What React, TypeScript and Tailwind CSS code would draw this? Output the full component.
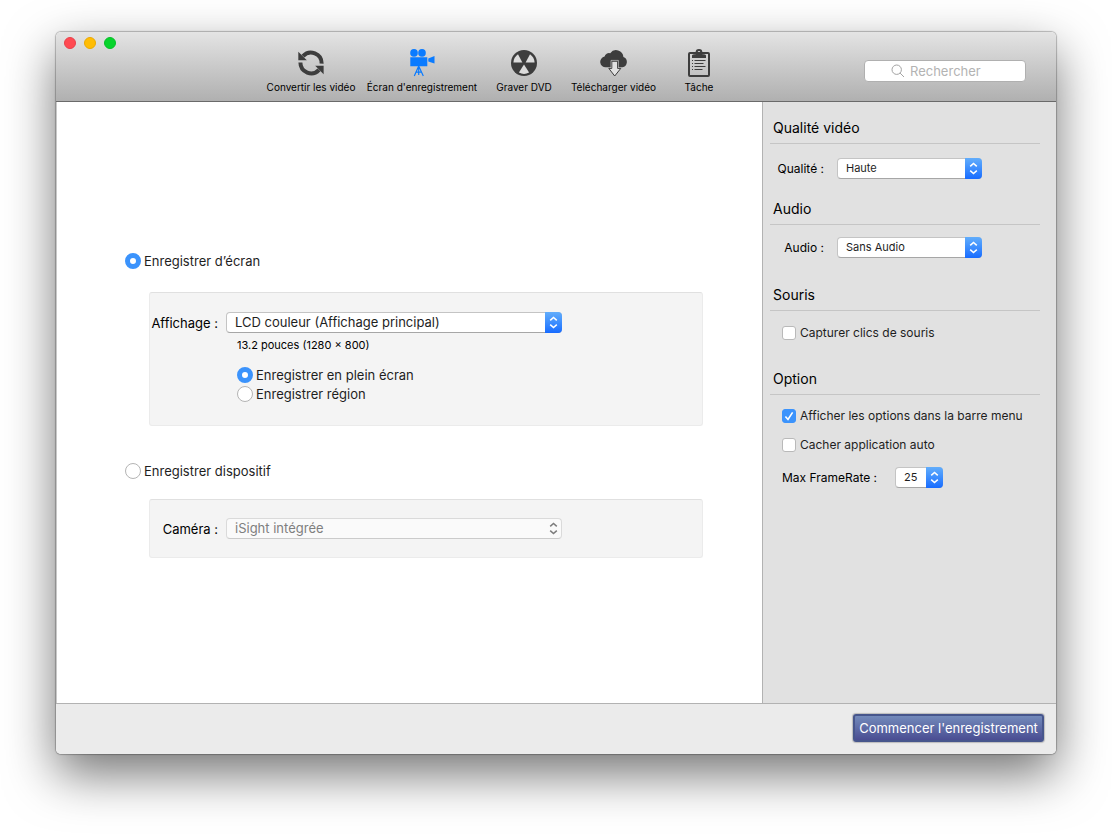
import { useState } from "react"
import type { ReactNode } from "react"
import clsx from "clsx"

function ConvertIcon() {
  return (
    <svg width="26" height="26" viewBox="0 0 26 26" fill="none" aria-hidden="true">
      <path d="M23.6 13.6A10.7 10.7 0 0 0 5 6.2" stroke="#3d3d3d" strokeWidth="4" />
      <path d="M0.3 1.8V10.2H8.8Z" fill="#3d3d3d" />
      <path d="M2.4 12.6A10.7 10.7 0 0 0 21 19.8" stroke="#3d3d3d" strokeWidth="4" />
      <path d="M25.6 24.2V15.8H17.2Z" fill="#3d3d3d" />
    </svg>
  )
}

function CameraIcon() {
  return (
    <svg width="25" height="28" viewBox="0 0 25 28" fill="#0a7bff" aria-hidden="true">
      <circle cx="4" cy="3.9" r="3.8" />
      <circle cx="12" cy="3.9" r="3.8" />
      <path d="M0.3 8.2H17.3V17.3H0.3Z" />
      <path d="M18.3 9.6L24.5 7V14.6L18.3 12.4Z" />
      <path d="M8.7 17L4.3 27M8.7 17L13.3 27M8.7 17V26M6 23.2H11.6" stroke="#0a7bff" strokeWidth="1.2" fill="none" />
    </svg>
  )
}

function BurnIcon() {
  return (
    <svg width="26" height="26" viewBox="0 0 26 26" aria-hidden="true">
      <circle cx="13" cy="13" r="13" fill="#3d3d3d" />
      <g fill="#dcdcdc">
        <path d="M11.4 12.4L2.4 12.4A10.7 10.7 0 0 1 7 4.2Z" />
        <path d="M14.6 12.4L23.6 12.4A10.7 10.7 0 0 0 19 4.2Z" />
        <path d="M13 14.4L18.1 22.6A10.9 10.9 0 0 1 7.9 22.6Z" />
      </g>
    </svg>
  )
}

function DownloadIcon() {
  return (
    <svg width="28" height="28" viewBox="0 0 28 28" aria-hidden="true">
      <path
        d="M5.8 18.3A5.4 5.4 0 0 1 4.6 7.6A4.4 4.4 0 0 1 10.2 4.2A7.3 7.3 0 0 1 23.4 8.1A5.3 5.3 0 0 1 22.4 18.3Z"
        fill="#3d3d3d"
      />
      <path d="M11.8 12.2H17.6V19.4H20.8L14.7 27L8.8 19.4H11.8Z" fill="#e2e2e2" stroke="#3d3d3d" strokeWidth="1" />
      <path d="M11 18.8V11.4H18.4V18.8" fill="none" stroke="#e2e2e2" strokeWidth="0.6" />
    </svg>
  )
}

function TaskIcon() {
  return (
    <svg width="22" height="28" viewBox="0 0 22 28" fill="none" aria-hidden="true">
      <rect x="1" y="4" width="20" height="23" rx="1" stroke="#3d3d3d" strokeWidth="2" />
      <path
        fillRule="evenodd"
        d="M4 9V6.6Q4 5.4 6 5.2H7.6V3.4A3.4 3.4 0 0 1 14.4 3.4V5.2H16Q18 5.4 18 6.6V9ZM11 2A1.3 1.3 0 1 0 11 4.6A1.3 1.3 0 1 0 11 2Z"
        fill="#3d3d3d"
      />
      <path d="M4 11.5H5M4 14.5H5M4 17.5H5M4 20.5H5" stroke="#3d3d3d" />
      <path d="M6.5 11.5H17.5M6.5 14.5H15.5M6.5 17.5H17.5M6.5 20.5H14.5" stroke="#3d3d3d" />
    </svg>
  )
}

const tools = [
  { label: "Convertir les vidéo", icon: <ConvertIcon />, width: "w-[100px]" },
  { label: "Écran d'enregistrement", icon: <CameraIcon />, width: "w-[122px]" },
  { label: "Graver DVD", icon: <BurnIcon />, width: "w-[82px]" },
  { label: "Télécharger vidéo", icon: <DownloadIcon />, width: "w-[97px]" },
  { label: "Tâche", icon: <TaskIcon />, width: "w-[74px]" },
]

interface SelectProps {
  id: string
  options: string[]
  className?: string
  disabled?: boolean
}

function Select({ id, options, className, disabled }: SelectProps) {
  return (
    <div className={clsx("relative h-[21px]", className)}>
      <select
        id={id}
        disabled={disabled}
        className={clsx(
          "block h-full w-full appearance-none rounded-[4px] border pl-2 pr-5 leading-[19px] outline-none",
          disabled
            ? "border-[#dadada] border-b-[#cbcbcb] bg-[#fafafa] text-[#7f7f7f] opacity-100"
            : "border-[#c4c4c4] border-b-[#a6a6a6] bg-white text-[#1e1e1e]"
        )}
      >
        {options.map((option) => (
          <option key={option}>{option}</option>
        ))}
      </select>
      <span
        className={clsx(
          "pointer-events-none absolute inset-y-0 right-0 flex w-[17px] items-center justify-center rounded-r-[4px]",
          !disabled && "bg-linear-to-b from-[#62adfb] to-[#176bff]"
        )}
      >
        <svg width="9" height="13" viewBox="0 0 9 13" fill="none" stroke={disabled ? "#7d7d7d" : "#fff"} strokeWidth="1.5">
          <path d="M1.2 4.4L4.5 1.4L7.8 4.4M1.2 8.6L4.5 11.6L7.8 8.6" />
        </svg>
      </span>
    </div>
  )
}

interface RadioProps {
  name: string
  label: string
  checked: boolean
  onChange: () => void
}

function Radio({ name, label, checked, onChange }: RadioProps) {
  return (
    <label className="flex h-[19px] items-center gap-[3px]">
      <input
        type="radio"
        name={name}
        checked={checked}
        onChange={onChange}
        className="size-4 shrink-0 appearance-none rounded-full border border-[#b4b4b4] bg-white checked:border-[5px] checked:border-[#3b93fc]"
      />
      {label}
    </label>
  )
}

function Checkbox({ label, defaultChecked }: { label: string; defaultChecked?: boolean }) {
  return (
    <label className="flex h-4 items-center gap-1">
      <span className="relative flex size-[14px] shrink-0">
        <input
          type="checkbox"
          defaultChecked={defaultChecked}
          className="peer size-full appearance-none rounded-[3px] border border-[#b9b9b9] bg-white checked:border-[#3b93fc] checked:bg-[#3b93fc]"
        />
        <svg
          viewBox="0 0 14 14"
          className="pointer-events-none absolute inset-0 hidden peer-checked:block"
          fill="none"
          stroke="#fff"
          strokeWidth="1.6"
        >
          <path d="M3.4 7.4L6 10.4L10.6 3.4" />
        </svg>
      </span>
      {label}
    </label>
  )
}

function Section({ title, children }: { title: string; children: ReactNode }) {
  return (
    <section>
      <h2 className="h-[30px] border-b border-[#c5c5c5] pl-[3px] text-sm leading-[28px] text-black">{title}</h2>
      {children}
    </section>
  )
}

export default function App() {
  const [source, setSource] = useState("screen")
  const [area, setArea] = useState("full")

  return (
    <div className="flex min-h-screen flex-col bg-white px-14 pt-8 pb-20 font-[Inter,'Liberation_Sans',sans-serif] text-[13px] leading-4 text-[#1e1e1e]">
      <div className="flex flex-1 flex-col overflow-hidden rounded-[5px] shadow-[0_0_1px_1px_rgba(0,0,0,0.25),0_20px_50px_rgba(0,0,0,0.55)]">
        <header className="flex h-[70px] shrink-0 border-b border-[#6a6a6a] bg-linear-to-b from-[#e4e4e4] to-[#b0b0b0]">
          <div className="flex w-[205px] gap-2 pt-[5px] pl-2">
            <button aria-label="Fermer" className="size-3 rounded-full border border-[#e8404a] bg-[#ff4a52]" />
            <button aria-label="Réduire" className="size-3 rounded-full border border-[#eba900] bg-[#ffbd05]" />
            <button aria-label="Agrandir" className="size-3 rounded-full border border-[#06bf27] bg-[#07d42c]" />
          </div>
          <nav className="flex pt-[15px]">
            {tools.map((tool) => (
              <button key={tool.label} className={clsx("flex flex-col items-center text-[10px] text-black", tool.width)}>
                <span className="flex h-8 items-center">{tool.icon}</span>
                <span className="whitespace-nowrap leading-4">{tool.label}</span>
              </button>
            ))}
          </nav>
          <div className="relative mt-7 mr-[30px] ml-auto h-[22px] w-[162px]">
            <input
              type="search"
              aria-label="Rechercher"
              placeholder="Rechercher"
              className="h-full w-full rounded-[4px] border border-[#b0b0b0] bg-white pl-[45px] outline-none placeholder:text-[#b3b3b3]"
            />
            <svg className="absolute top-1 left-[27px]" width="14" height="14" viewBox="0 0 14 14" fill="none" stroke="#a3a3a3">
              <circle cx="5.7" cy="5.7" r="4.7" />
              <path d="M9.1 9.1L13 13" />
            </svg>
          </div>
        </header>

        <div className="flex flex-1">
          <main className="flex-1 border-x border-r-[#b2b2b2] border-l-[#c8c8c8] bg-white pt-[149px] pr-[59px] pl-[68px]">
            <Radio name="source" label="Enregistrer d’écran" checked={source === "screen"} onChange={() => setSource("screen")} />
            <div className="mt-[22px] ml-6 h-[134px] rounded-[3px] border border-[#ebebeb] border-t-[#e0e0e0] bg-[#f4f4f4] pt-[19px]">
              <div className="flex items-center">
                <label htmlFor="display" className="w-[68px] text-right text-black">
                  Affichage :
                </label>
                <Select id="display" options={["LCD couleur (Affichage principal)"]} className="ml-2 w-[336px]" />
              </div>
              <div className="pl-[87px]">
                <p className="mt-1 text-[11px] text-black">13.2 pouces (1280 × 800)</p>
                <div className="mt-3">
                  <Radio name="area" label="Enregistrer en plein écran" checked={area === "full"} onChange={() => setArea("full")} />
                  <Radio name="area" label="Enregistrer région" checked={area === "region"} onChange={() => setArea("region")} />
                </div>
              </div>
            </div>

            <div className="mt-[35px]">
              <Radio name="source" label="Enregistrer dispositif" checked={source === "device"} onChange={() => setSource("device")} />
            </div>
            <div className="mt-[19px] ml-6 flex h-[59px] items-center rounded-[3px] border border-[#ebebeb] border-t-[#e0e0e0] bg-[#f4f4f4]">
              <label htmlFor="camera" className="w-[68px] text-right text-black">
                Caméra :
              </label>
              <Select id="camera" options={["iSight intégrée"]} disabled className="ml-2 w-[336px]" />
            </div>
          </main>

          <aside className="flex w-[293px] shrink-0 flex-col bg-[#e1e1e1] pt-3 pr-4 pl-[7px]">
            <Section title="Qualité vidéo">
              <div className="flex items-center pt-[14px] pb-4">
                <label htmlFor="quality" className="w-[54px] text-right text-xs text-black">
                  Qualité :
                </label>
                <Select id="quality" options={["Haute", "Moyenne", "Basse"]} className="ml-[13px] w-[145px] text-[11px]" />
              </div>
            </Section>
            <Section title="Audio">
              <div className="flex items-center pt-3 pb-[23px]">
                <label htmlFor="audio" className="w-[54px] text-right text-xs text-black">
                  Audio :
                </label>
                <Select id="audio" options={["Sans Audio", "Micro intégré"]} className="ml-[13px] w-[145px] text-[11px]" />
              </div>
            </Section>
            <Section title="Souris">
              <div className="pt-[14px] pb-6 pl-3 text-xs">
                <Checkbox label="Capturer clics de souris" />
              </div>
            </Section>
            <Section title="Option">
              <div className="flex flex-col pt-[13px] pl-3 text-xs">
                <Checkbox label="Afficher les options dans la barre menu" defaultChecked />
                <div className="mt-[13px]">
                  <Checkbox label="Cacher application auto" />
                </div>
                <div className="mt-[14px] flex items-center">
                  <label htmlFor="framerate" className="w-[113px] text-black">
                    Max FrameRate :
                  </label>
                  <Select id="framerate" options={["25", "30", "60"]} className="w-12 text-[11px]" />
                </div>
              </div>
            </Section>
          </aside>
        </div>

        <footer className="flex h-[51px] shrink-0 justify-end border-t border-[#b2b2b2] bg-[#ebebeb] pt-[10px] pr-3">
          <button className="h-7 w-[191px] rounded-[3px] border-2 border-[#47568c] bg-linear-to-b from-[#738abb] to-[#4a4d92] text-[13px] text-white shadow-[0_0_1px_1px_rgba(0,0,0,0.2)]">
            Commencer l'enregistrement
          </button>
        </footer>
      </div>
    </div>
  )
}
